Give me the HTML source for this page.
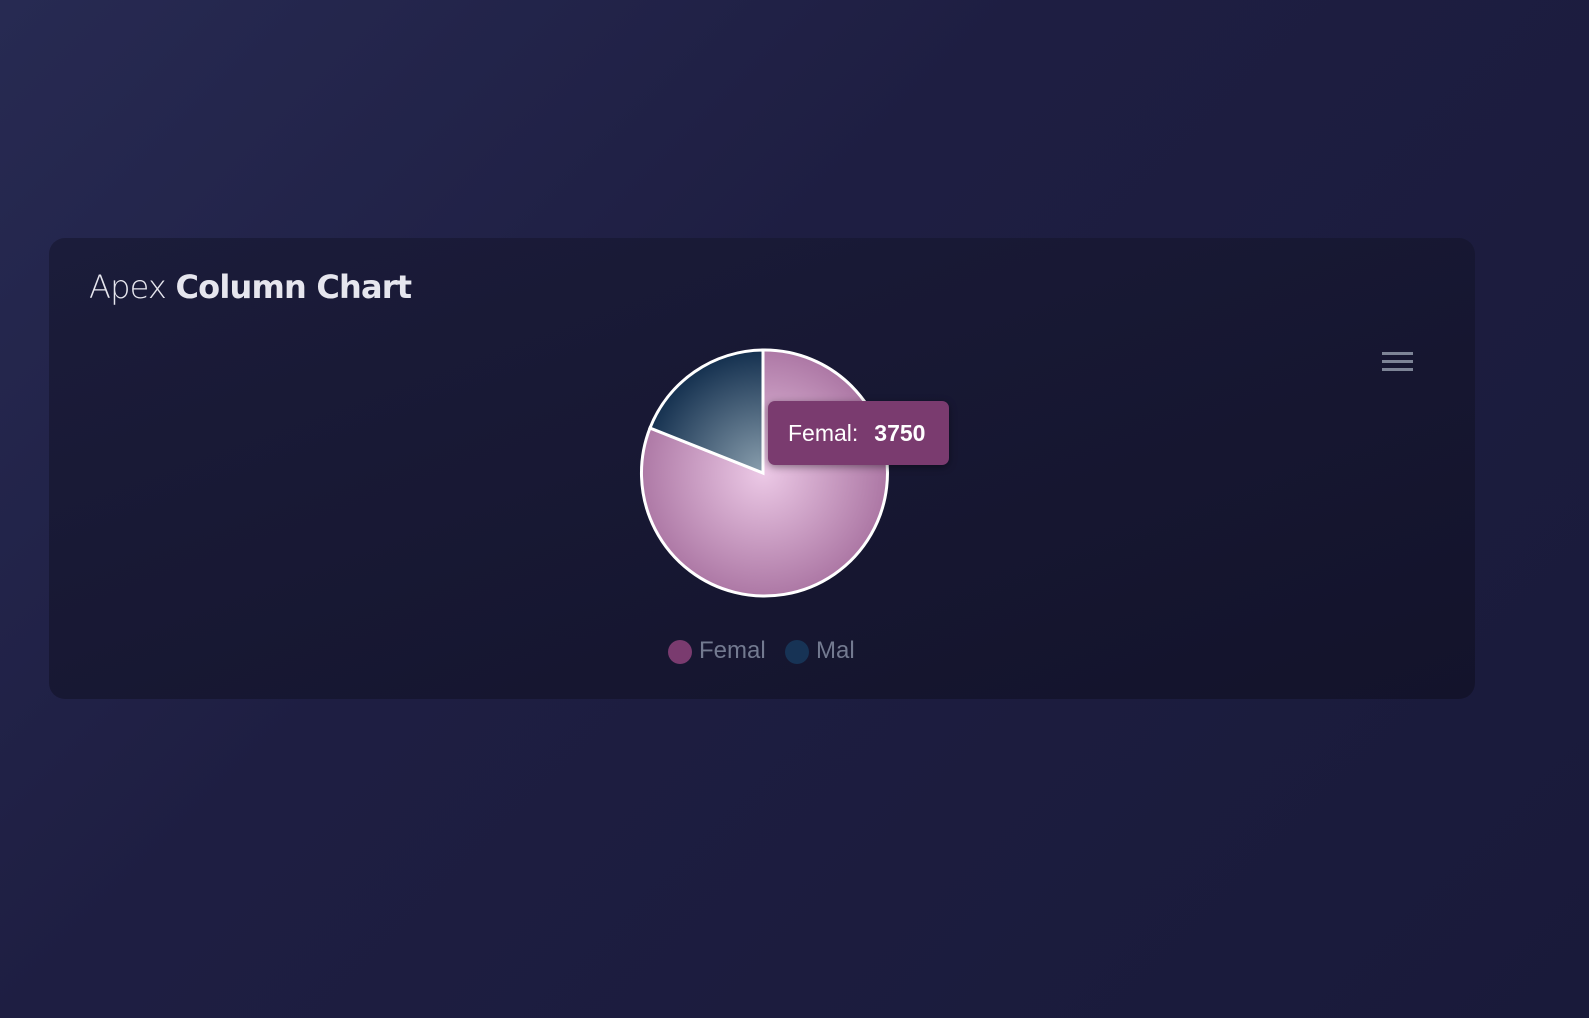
<!DOCTYPE html>
<html><head><style>
html,body{margin:0;padding:0;width:1589px;height:1018px;overflow:hidden}
body{background:linear-gradient(135deg,#272a52 0%,#1e1e42 40%,#191a3a 100%);font-family:"Liberation Sans",sans-serif}
.card{position:absolute;left:49px;top:238px;width:1426px;height:461px;border-radius:16px;background:linear-gradient(160deg,#1b1c3a,#13132b)}
.title{position:absolute;left:89px;top:268px;font-size:32px;color:#e6e6ee;font-family:"DejaVu Sans","Liberation Sans",sans-serif;letter-spacing:-0.8px}
.title span{font-weight:300}
.title b{font-weight:bold}
.menu{position:absolute;left:1382px;top:352px;width:31px}
.menu div{height:3px;background:#7d8496;margin-bottom:5px}
.tip{position:absolute;left:768px;top:401px;width:181px;height:64px;border-radius:7px;background:#7a3b6f;color:#fff;font-size:23px;line-height:64px;box-shadow:0 2px 8px rgba(0,0,0,.4)}
.legend{position:absolute;top:637px;font-size:24px;color:#737a90}
.dot{position:absolute;width:24px;height:24px;border-radius:50%}
</style></head><body>
<div class="card"></div>
<div class="title"><span>Apex</span> <b>Column Chart</b></div>
<div class="menu"><div></div><div></div><div></div></div>
<svg style="position:absolute;left:0;top:0" width="1589" height="1018">
<defs>
<radialGradient id="f" cx="763" cy="473" r="123" gradientUnits="userSpaceOnUse"><stop offset="0" stop-color="#ecc9e6"/><stop offset="1" stop-color="#ad78a5"/></radialGradient>
<radialGradient id="m" cx="763" cy="473" r="123" gradientUnits="userSpaceOnUse"><stop offset="0" stop-color="#8a9fae"/><stop offset="1" stop-color="#14304f"/></radialGradient>
</defs>
<path d="M763 473 L763 350 A123 123 0 1 1 650 428 Z" fill="url(#f)" stroke="#fff" stroke-width="3"/>
<path d="M763 473 L650 428 A123 123 0 0 1 763 350 Z" fill="url(#m)" stroke="#fff" stroke-width="3"/>
</svg>
<div class="tip"><span style="margin-left:20px">Femal:</span><b style="margin-left:16px">3750</b></div>
<div class="dot" style="left:668px;top:640px;background:#7a3b6f"></div>
<div class="legend" style="left:699px">Femal</div>
<div class="dot" style="left:785px;top:640px;background:#173355"></div>
<div class="legend" style="left:816px">Mal</div>
</body></html>
